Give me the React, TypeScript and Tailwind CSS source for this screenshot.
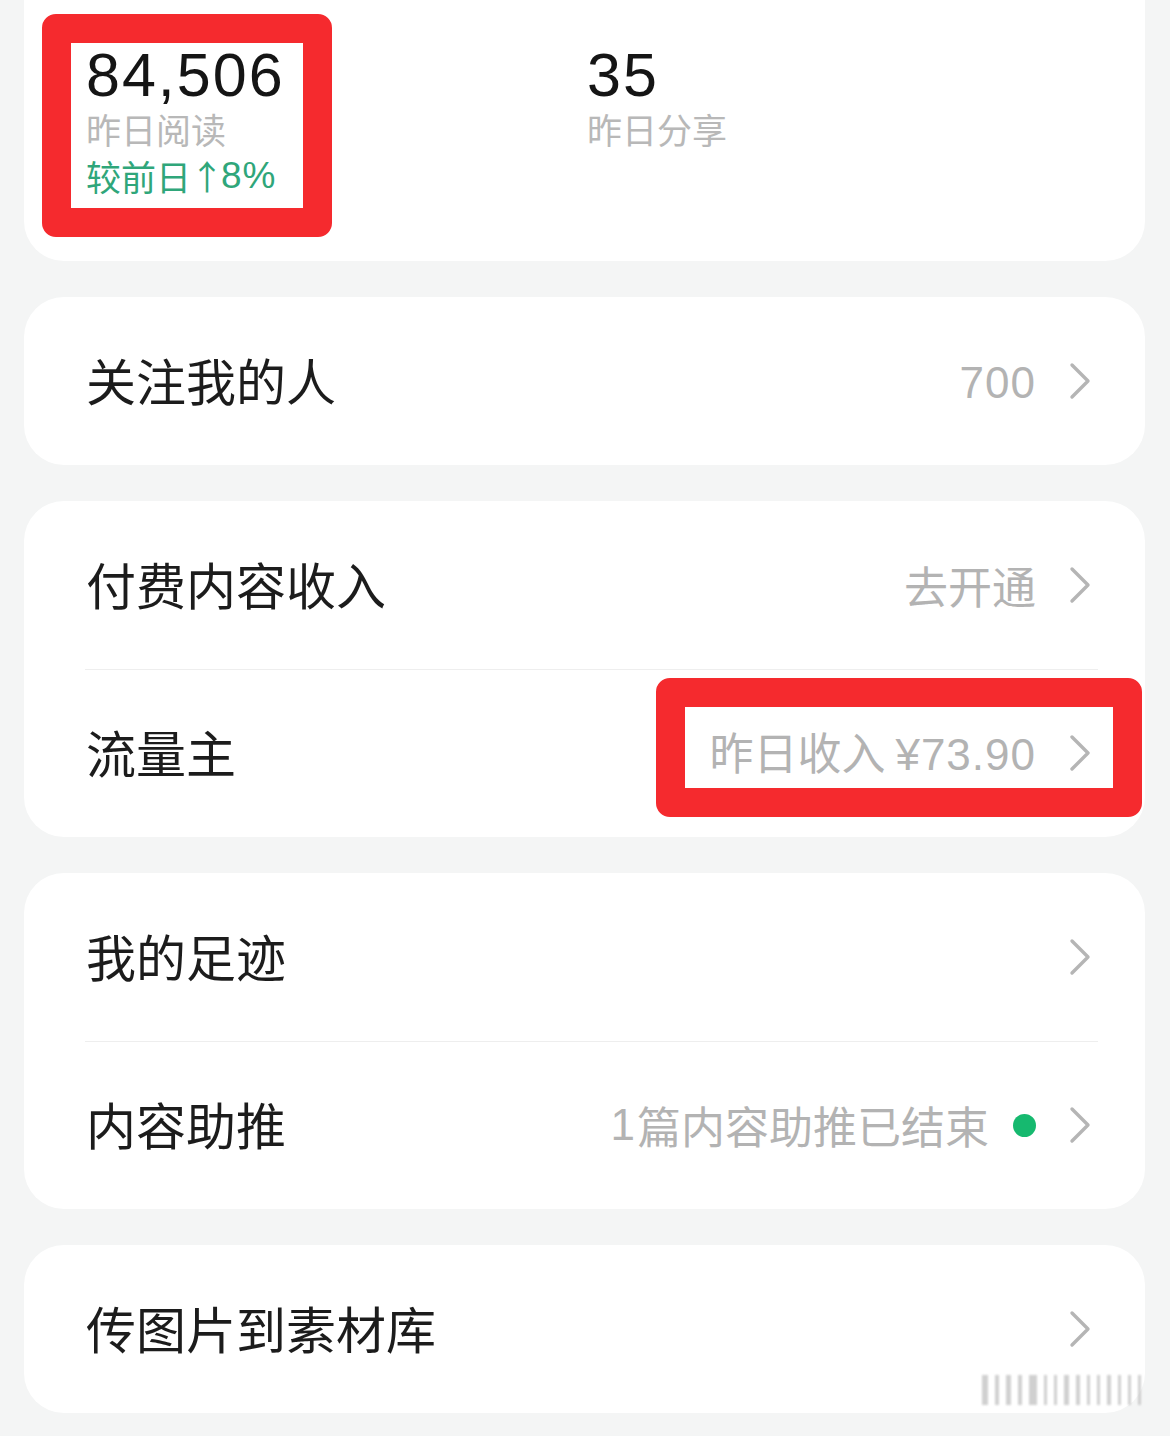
import React from 'react';

const cjk = { fontFamily: '"Noto Sans CJK SC", "Noto Sans", sans-serif' };
const num = { fontFamily: '"Liberation Sans", "Noto Sans CJK SC", sans-serif' };

const Chevron: React.FC = () => (
  <svg width="24" height="38" viewBox="0 0 24 38" className="shrink-0">
    <path d="M4 3 L20 19 L4 35" fill="none" stroke="#b5b5b5" strokeWidth="3.4" strokeLinecap="round" strokeLinejoin="round" />
  </svg>
);

const Row: React.FC<{ label: string; value?: React.ReactNode; divider?: boolean }> = ({ label, value, divider }) => (
  <div className="relative">
    {divider && <div className="absolute top-0 left-[61px] right-[47px] h-px bg-[#eeeeee]" />}
    <div className="h-[168px] flex items-center pl-[62px] pr-[53px]">
      <span className="text-[50px] text-[#1c1c1c] leading-none flex-1 -mt-[4px]" style={cjk}>{label}</span>
      {value && <span className="text-[44px] text-[#b3b3b3] leading-none mr-[32px]">{value}</span>}
      <Chevron />
    </div>
  </div>
);

const Card: React.FC<{ children: React.ReactNode }> = ({ children }) => (
  <div className="relative bg-white rounded-[40px] mx-[24px] w-[1121px]">{children}</div>
);

// red annotation frame drawn on top of the screenshot
const Frame: React.FC<{ className: string }> = ({ className }) => (
  <div className={`absolute border-[29px] border-[#f52a2e] rounded-[14px] pointer-events-none ${className}`} />
);

export default function App() {
  return (
    <div className="w-[1170px] h-[1436px] bg-[#f4f5f5] overflow-hidden relative" style={cjk}>
      <div className="relative bg-white rounded-b-[40px] mx-[24px] w-[1121px] h-[261px]">
        <div className="flex pt-[46px] pl-[62px]">
          <div className="w-[501px] flex flex-col">
            <span className="text-[61px] leading-[58px] text-[#151515] font-medium tracking-[2px]" style={num}>84,506</span>
            <span className="text-[35px] leading-[44px] text-[#b8b8b8] mt-[3px]">昨日阅读</span>
            <span className="text-[35px] leading-[44px] text-[#2fa67a] mt-[3px] flex items-center">
              较前日<span className="text-[34px] -ml-[1px] -mr-[3px]" style={cjk}>↑</span><span className="text-[37px] tracking-[1px]" style={num}>8%</span>
            </span>
          </div>
          <div className="flex flex-col">
            <span className="text-[61px] leading-[58px] text-[#151515] font-medium tracking-[2px]" style={num}>35</span>
            <span className="text-[35px] leading-[44px] text-[#b8b8b8] mt-[3px]">昨日分享</span>
          </div>
        </div>
        <Frame className="left-[18px] top-[14px] w-[290px] h-[223px]" />
      </div>

      <div className="flex flex-col gap-[36px] mt-[36px]">
        <Card>
          <Row label="关注我的人" value={<span className="tracking-[1px]" style={num}>700</span>} />
        </Card>

        <Card>
          <Row label="付费内容收入" value="去开通" />
          <Row label="流量主" value={<>昨日收入 <span className="tracking-[1px]" style={num}>¥73.90</span></>} divider />
          <Frame className="left-[632px] top-[177px] w-[486px] h-[139px]" />
        </Card>

        <Card>
          <Row label="我的足迹" />
          <Row
            label="内容助推"
            divider
            value={
              <span className="flex items-center">
                <span className="mr-[2px]" style={num}>1</span>篇内容助推已结束
                <span className="ml-[24px] w-[23px] h-[23px] rounded-full bg-[#16b96f]" />
              </span>
            }
          />
        </Card>

        <Card>
          <Row label="传图片到素材库" />
          {/* faint blurred watermark */}
          <div className="absolute right-[4px] bottom-[8px] flex items-end gap-[7px] blur-[1px] opacity-70">
            {[6, 4, 5, 4, 8, 3, 3, 5, 4, 3, 3, 4, 3, 3, 3].map((w, i) => (
              <div key={i} className="h-[30px] bg-[#bdbdbd]" style={{ width: w }} />
            ))}
          </div>
        </Card>
      </div>
    </div>
  );
}
